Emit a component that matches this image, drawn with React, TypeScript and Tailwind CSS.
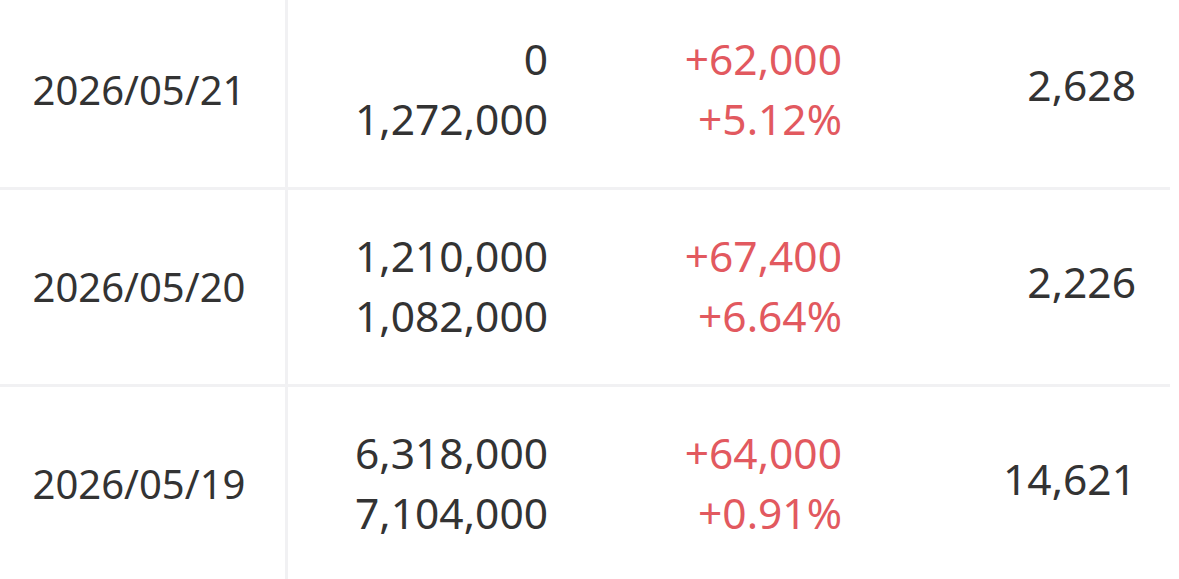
const rows = [
  { date: "2026/05/21", a: "0", b: "1,272,000", change: "+62,000", rate: "+5.12%", vol: "2,628" },
  { date: "2026/05/20", a: "1,210,000", b: "1,082,000", change: "+67,400", rate: "+6.64%", vol: "2,226" },
  { date: "2026/05/19", a: "6,318,000", b: "7,104,000", change: "+64,000", rate: "+0.91%", vol: "14,621" },
];

export default function App() {
  return (
    <div className="w-full h-[579px] overflow-hidden bg-white" style={{ fontFamily: '"Noto Sans", sans-serif' }}>
      <div className="w-[1170px] -mt-[7px]">
        {rows.map((r) => (
          <div
            key={r.date}
            className="grid grid-cols-[288px_294px_294px_294px] h-[197px] border-b-[3px] border-[#f1f1f3] text-[#333333]"
          >
            <div className="flex items-center justify-center border-r-[3px] border-[#f1f1f3] text-[40px] pr-[7px]">
              {r.date}
            </div>
            <div className="flex flex-col items-end justify-center pr-[34px] text-[42.5px] leading-[60px] pb-[2px]">
              <span>{r.a}</span>
              <span>{r.b}</span>
            </div>
            <div className="flex flex-col items-end justify-center pr-[34px] text-[42.5px] leading-[60px] text-[#e2595f] pb-[2px]">
              <span>{r.change}</span>
              <span>{r.rate}</span>
            </div>
            <div className="flex items-center justify-end pr-[34px] text-[42.5px] pb-[10px]">{r.vol}</div>
          </div>
        ))}
      </div>
    </div>
  );
}
